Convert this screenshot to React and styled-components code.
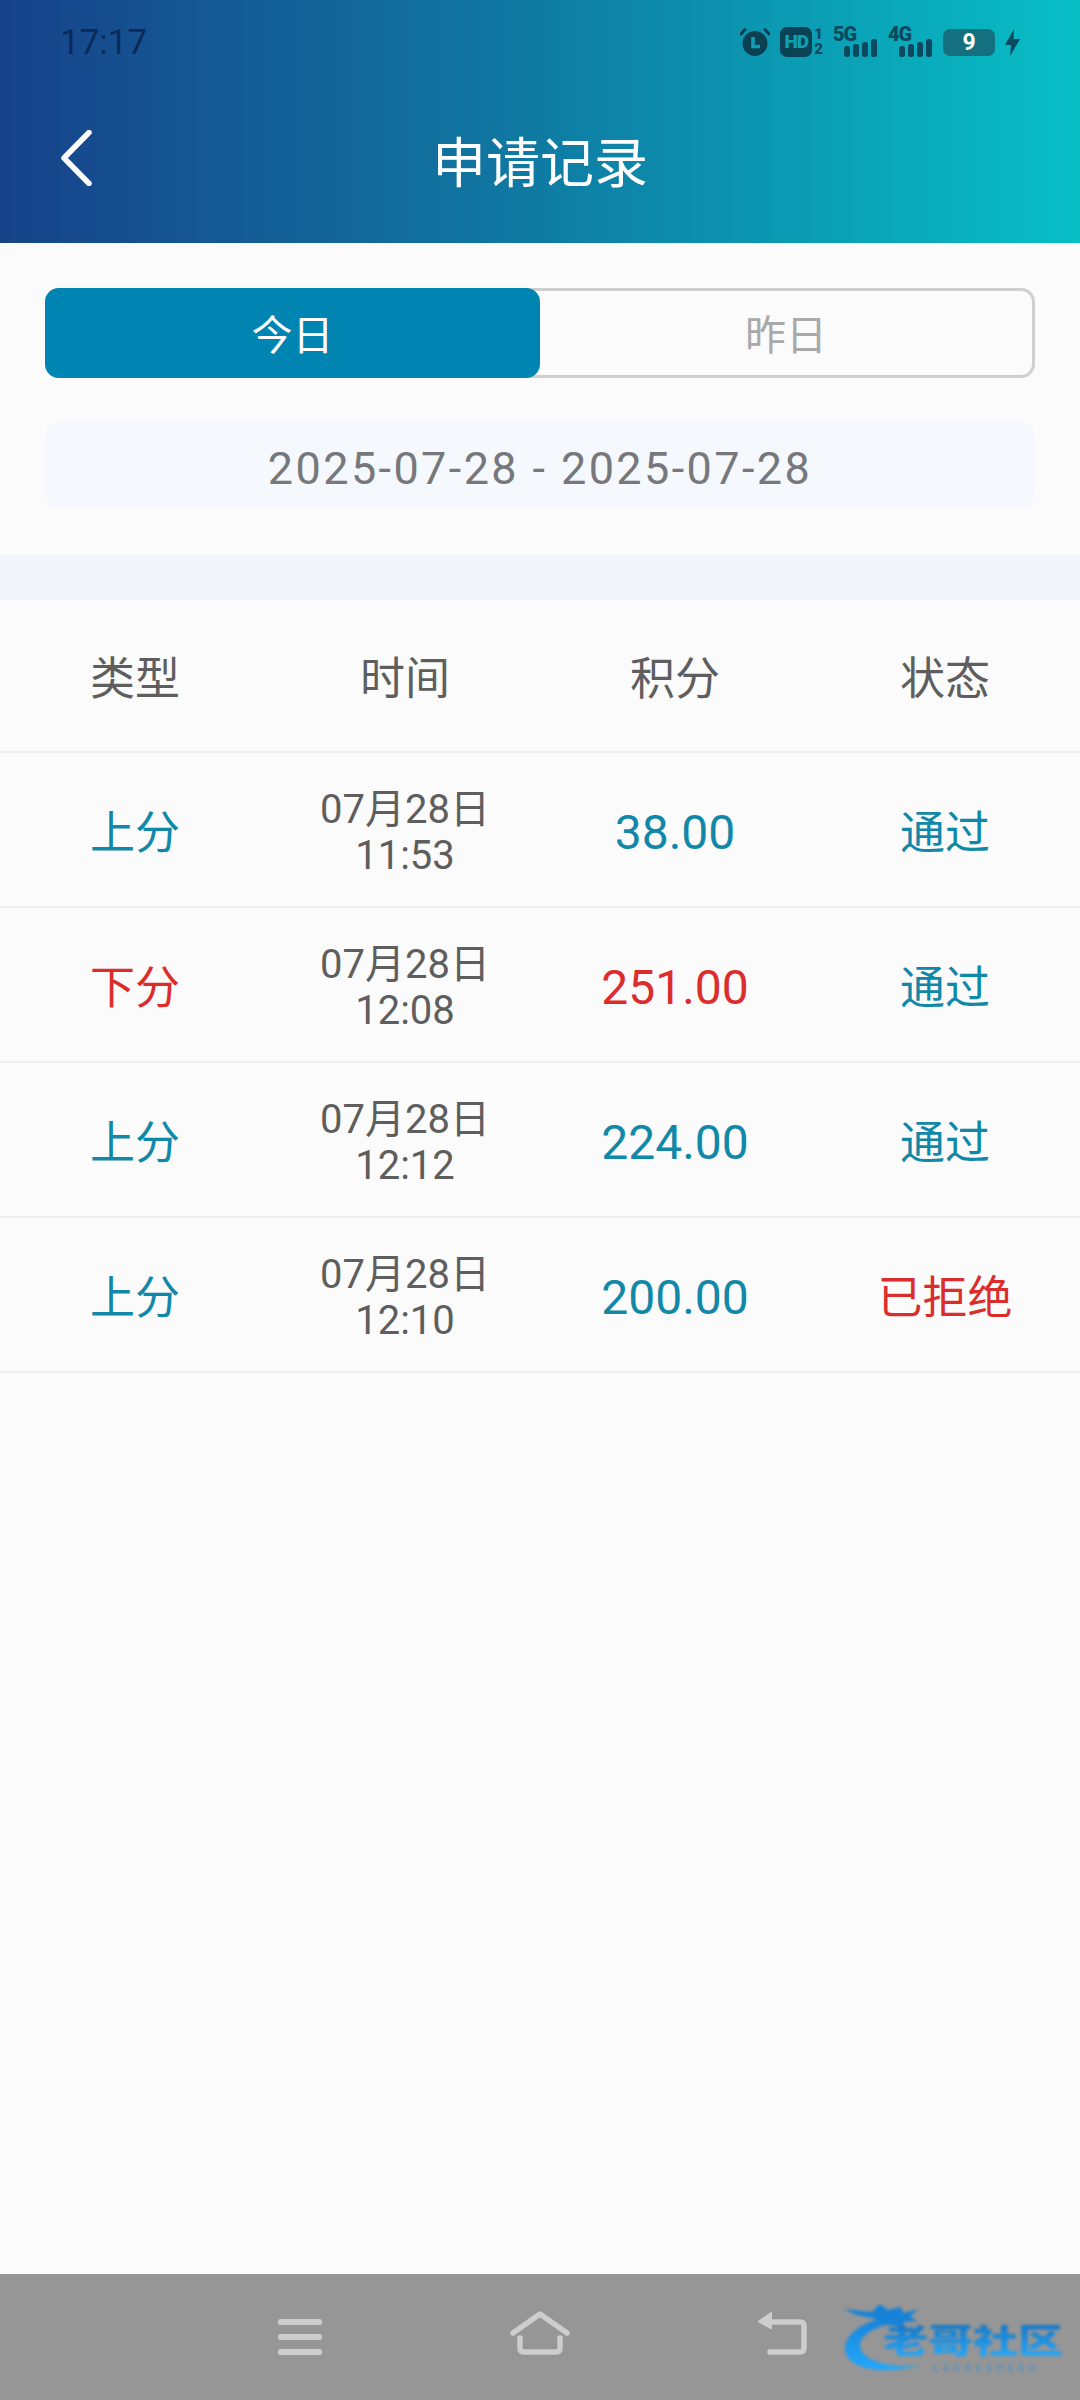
import React, { useState } from "react";
import styled, { createGlobalStyle } from "styled-components";

const FONT = `Roboto, "Noto Sans CJK SC", sans-serif`;

const GlobalStyle = createGlobalStyle`
  html, body {
    margin: 0;
    padding: 0;
    background: #fbfbfb;
  }
  * {
    box-sizing: border-box;
  }
`;

const records = [
  { type: "上分", day: "07月28日", time: "11:53", score: "38.00", status: "通过" },
  { type: "下分", day: "07月28日", time: "12:08", score: "251.00", status: "通过" },
  { type: "上分", day: "07月28日", time: "12:12", score: "224.00", status: "通过" },
  { type: "上分", day: "07月28日", time: "12:10", score: "200.00", status: "已拒绝" },
];

const Alarm = () => (
  <svg width="30" height="30" viewBox="0 0 30 30">
    <circle cx="15" cy="16.5" r="12.5" fill="#0b3f52" />
    <path d="M5 2.5 L1 7 M25 2.5 L29 7" stroke="#0b3f52" strokeWidth="3" strokeLinecap="round" />
    <path d="M13 10 V19.5 H20" stroke="#0fa0b4" strokeWidth="3.6" fill="none" />
  </svg>
);

const BackChevron = () => (
  <svg width="32" height="56" viewBox="0 0 32 56">
    <path d="M29 2.5 L4 28 L29 53.5" stroke="#fff" strokeWidth="5.5" fill="none" strokeLinecap="round" strokeLinejoin="round" />
  </svg>
);

const Bars = () => (
  <svg width="34" height="18" viewBox="0 0 34 18">
    <rect x="0" y="7" width="6" height="11" rx="2.5" fill="#0b4a5e" />
    <rect x="9" y="5" width="6" height="13" rx="2.5" fill="#0b4a5e" />
    <rect x="18" y="3" width="6" height="15" rx="2.5" fill="#0b4a5e" />
    <rect x="27" y="0" width="6" height="18" rx="2.5" fill="#0b4a5e" />
  </svg>
);

const Bolt = () => (
  <svg width="15" height="27" viewBox="0 0 15 27">
    <path d="M9 0 L0 16 H6 L5 27 L15 10 H8.5 Z" fill="#0b4a5e" />
  </svg>
);

const MenuIcon = () => (
  <svg width="46" height="36" viewBox="0 0 46 36">
    <rect x="1" y="0" width="44" height="6" rx="2.5" fill="#cdcdcd" />
    <rect x="1" y="15" width="44" height="6" rx="2.5" fill="#cdcdcd" />
    <rect x="1" y="30" width="44" height="6" rx="2.5" fill="#cdcdcd" />
  </svg>
);

const HomeIcon = () => (
  <svg width="60" height="44" viewBox="0 0 60 44">
    <path d="M3 22 L30 3 L57 22" stroke="#cdcdcd" strokeWidth="5.5" fill="none" strokeLinecap="round" strokeLinejoin="round" />
    <path d="M10 27 V37 Q10 41 14 41 H46 Q50 41 50 37 V27" stroke="#cdcdcd" strokeWidth="5.5" fill="none" strokeLinecap="round" />
  </svg>
);

const ReturnIcon = () => (
  <svg width="50" height="44" viewBox="0 0 50 44">
    <path d="M12 11 H43 Q47 11 47 15 V37 Q47 41 43 41 H13" stroke="#cdcdcd" strokeWidth="5.5" fill="none" strokeLinecap="round" />
    <path d="M14 2 L2 10.5 L14 17 Z" fill="#cdcdcd" stroke="#cdcdcd" strokeWidth="2" strokeLinejoin="round" />
  </svg>
);

const Dragon = () => (
  <svg width="112" height="78" viewBox="0 0 112 78">
    <defs>
      <linearGradient id="dragonFill" x1="0" y1="0" x2="0" y2="1">
        <stop offset="0" stopColor="#1683d8" />
        <stop offset="1" stopColor="#23a8fb" />
      </linearGradient>
    </defs>
    <path
      d="M42 14 C14 22 3 34 3 46 C4 64 34 74 80 62 C50 66 20 58 18 44 C17 34 28 26 50 20 Z"
      fill="url(#dragonFill)"
    />
    <path
      d="M2 6 L30 9 L38 1 L46 7 L58 4 L62 10 L76 6 L68 14 L76 18 L62 19 L60 24 L44 22 L34 16 L14 12 Z"
      fill="#1683d8"
    />
  </svg>
);

export default function App() {
  const [tab, setTab] = useState("today");

  return (
    <Page>
      <GlobalStyle />
      <Header>
        <StatusBar>
          <Clock>17:17</Clock>
          <StatusIcons>
            <Alarm />
            <HdGroup>
              <HdBadge>HD</HdBadge>
              <SimDigits>
                <span>1</span>
                <span>2</span>
              </SimDigits>
            </HdGroup>
            <Signal>
              <NetLabel>5G</NetLabel>
              <Bars />
            </Signal>
            <Signal>
              <NetLabel>4G</NetLabel>
              <Bars />
            </Signal>
            <Battery>9</Battery>
            <Bolt />
          </StatusIcons>
        </StatusBar>
        <TitleBar>
          <BackButton>
            <BackChevron />
          </BackButton>
          <Title>申请记录</Title>
        </TitleBar>
      </Header>

      <FilterPanel>
        <Tabs>
          <Tab $active={tab === "today"} onClick={() => setTab("today")}>今日</Tab>
          <Tab $active={tab === "yesterday"} onClick={() => setTab("yesterday")}>昨日</Tab>
        </Tabs>
        <DateRange>2025-07-28 - 2025-07-28</DateRange>
      </FilterPanel>

      <Band />

      <HeadRow>
        <HeadCell>类型</HeadCell>
        <HeadCell>时间</HeadCell>
        <HeadCell>积分</HeadCell>
        <HeadCell>状态</HeadCell>
      </HeadRow>

      {records.map((r, index) => (
        <Row key={index}>
          <Cell $red={r.type === "下分"}>{r.type}</Cell>
          <TimeCell>
            <div>{r.day}</div>
            <div>{r.time}</div>
          </TimeCell>
          <ScoreCell $red={r.type === "下分"}>{r.score}</ScoreCell>
          <Cell $red={r.status === "已拒绝"}>{r.status}</Cell>
        </Row>
      ))}

      <Spacer />

      <NavBar>
        <NavItems>
          <MenuIcon />
          <HomeIcon />
          <ReturnIcon />
        </NavItems>
        <Watermark>
          <Dragon />
          <WatermarkName>老哥社区</WatermarkName>
          <WatermarkSub>LAOGESHEQU</WatermarkSub>
        </Watermark>
      </NavBar>
    </Page>
  );
}

const Page = styled.div`
  width: 1080px;
  height: 2400px;
  display: flex;
  flex-direction: column;
  background: #fbfbfb;
  font-family: ${FONT};
  overflow: hidden;
`;

const Header = styled.header`
  height: 243px;
  flex-shrink: 0;
  background: linear-gradient(90deg, #17428a 0%, #0f7ba3 50%, #07bfc6 100%);
`;

const StatusBar = styled.div`
  height: 84px;
  padding: 0 60px;
  display: flex;
  align-items: center;
  justify-content: space-between;
`;

const Clock = styled.span`
  font-size: 35px;
  color: #0c2a55;
`;

const StatusIcons = styled.div`
  display: flex;
  align-items: center;
  gap: 10px;
`;

const HdGroup = styled.div`
  display: flex;
  align-items: center;
  gap: 2px;
`;

const HdBadge = styled.div`
  width: 32px;
  height: 30px;
  border-radius: 7px;
  background: #0b4356;
  color: #0fa0b4;
  font-size: 19px;
  font-weight: 900;
  line-height: 30px;
  text-align: center;
  letter-spacing: -1px;
`;

const SimDigits = styled.div`
  display: flex;
  flex-direction: column;
  font-size: 15px;
  font-weight: 900;
  line-height: 15px;
  color: #0b4a5e;
`;

const Signal = styled.div`
  width: 45px;
  height: 30px;
  position: relative;
  display: flex;
  align-items: flex-end;
  justify-content: flex-end;
`;

const NetLabel = styled.span`
  position: absolute;
  top: -3px;
  left: 0;
  font-size: 20px;
  line-height: 20px;
  font-weight: 900;
  letter-spacing: -1px;
  color: #0b4a5e;
`;

const Battery = styled.div`
  width: 52px;
  height: 27px;
  border-radius: 7px;
  background: #14707f;
  color: #fff;
  font-size: 23px;
  font-weight: 700;
  line-height: 27px;
  text-align: center;
`;

const TitleBar = styled.div`
  height: 159px;
  padding-bottom: 8px;
  position: relative;
  display: flex;
  align-items: center;
  justify-content: center;
`;

const BackButton = styled.div`
  position: absolute;
  left: 60px;
  top: 46px;
  display: flex;
`;

const Title = styled.h1`
  margin: 0;
  font-size: 54px;
  font-weight: 400;
  color: #fff;
`;

const FilterPanel = styled.section`
  height: 312px;
  flex-shrink: 0;
  padding: 45px 45px 0;
`;

const Tabs = styled.div`
  height: 90px;
  display: grid;
  grid-template-columns: 1fr 1fr;
  border-radius: 14px;
  border: 3px solid #cfcfcf;
`;

const Tab = styled.button`
  margin: ${(p) => (p.$active ? "-3px 0 -3px -3px" : "0")};
  padding: 0 0 2px;
  border: none;
  border-radius: ${(p) => (p.$active ? "14px" : "0 11px 11px 0")};
  background: ${(p) => (p.$active ? "#0085b2" : "transparent")};
  color: ${(p) => (p.$active ? "#fff" : "#a9a9a9")};
  font-family: ${FONT};
  font-size: 41px;
  cursor: pointer;
`;

const DateRange = styled.div`
  height: 86px;
  margin-top: 44px;
  padding-top: 7px;
  border-radius: 14px;
  background: #f5f8fd;
  color: #77787c;
  font-size: 45px;
  letter-spacing: 2.4px;
  display: flex;
  align-items: center;
  justify-content: center;
`;

const Band = styled.div`
  height: 45px;
  flex-shrink: 0;
  background: #f2f5fc;
`;

const HeadRow = styled.div`
  height: 153px;
  flex-shrink: 0;
  display: grid;
  grid-template-columns: repeat(4, 1fr);
  align-items: center;
  border-bottom: 2px solid #eeeeee;
`;

const HeadCell = styled.div`
  text-align: center;
  font-size: 45px;
  color: #5e5e5e;
`;

const Row = styled.div`
  height: 155px;
  flex-shrink: 0;
  display: grid;
  grid-template-columns: repeat(4, 1fr);
  align-items: center;
  border-bottom: 2px solid #eeeeee;
`;

const Cell = styled.div`
  text-align: center;
  font-size: 45px;
  color: ${(p) => (p.$red ? "#dc2d2d" : "#1288a8")};
`;

const TimeCell = styled.div`
  padding-top: 6px;
  text-align: center;
  font-size: 40px;
  line-height: 46px;
  color: #5e5e5e;
`;

const ScoreCell = styled(Cell)`
  padding-top: 6px;
  font-size: 48px;
`;

const Spacer = styled.div`
  flex: 1;
`;

const NavBar = styled.nav`
  height: 126px;
  flex-shrink: 0;
  position: relative;
  background: #969696;
  padding-top: 37px;
`;

const NavItems = styled.div`
  width: 530px;
  height: 44px;
  margin-left: 277px;
  display: flex;
  justify-content: space-between;
  align-items: flex-end;
`;

const Watermark = styled.div`
  position: absolute;
  left: 842px;
  top: 29px;
  width: 225px;
  height: 78px;
  filter: blur(1.4px);
`;

const WatermarkName = styled.span`
  position: absolute;
  left: 41px;
  top: 16px;
  font-size: 45px;
  line-height: 45px;
  font-weight: 900;
  white-space: nowrap;
  transform: scaleY(0.75);
  background: linear-gradient(180deg, #1578c8, #26a9fb);
  -webkit-background-clip: text;
  background-clip: text;
  color: transparent;
`;

const WatermarkSub = styled.span`
  position: absolute;
  left: 91px;
  top: 60px;
  font-size: 9px;
  line-height: 11px;
  letter-spacing: 5px;
  color: #2e93d8;
  white-space: nowrap;
`;
